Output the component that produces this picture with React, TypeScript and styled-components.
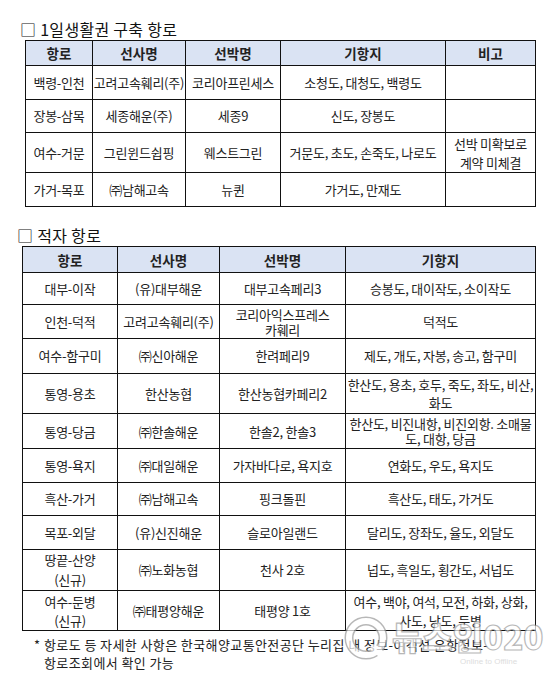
import React from 'react';
import styled, { createGlobalStyle } from 'styled-components';

const GlobalStyle = createGlobalStyle`
  html, body {
    margin: 0;
    padding: 0;
    background: #ffffff;
  }
  body {
    font-family: "Noto Sans CJK KR", "Noto Sans", sans-serif;
    color: #1a1a1a;
  }
`;

interface Row {
  h: number;
  cells: string[];
  lh?: number;
}

const table1Cols = [67, 93, 95, 165, 90];
const table1Head = ['항로', '선사명', '선박명', '기항지', '비고'];
const table1Rows: Row[] = [
  { h: 34, cells: ['백령-인천', '고려고속훼리(주)', '코리아프린세스', '소청도, 대청도, 백령도', ''] },
  { h: 33, cells: ['장봉-삼목', '세종해운(주)', '세종9', '신도, 장봉도', ''] },
  { h: 40, lh: 19, cells: ['여수-거문', '그린윈드쉽핑', '웨스트그린', '거문도, 초도, 손죽도, 나로도', '선박 미확보로\n계약 미체결'] },
  { h: 34, cells: ['가거-목포', '㈜남해고속', '뉴퀸', '가거도, 만재도', ''] },
];

const table2Cols = [95, 102, 126, 190];
const table2Head = ['항로', '선사명', '선박명', '기항지'];
const table2Rows: Row[] = [
  { h: 32, cells: ['대부-이작', '(유)대부해운', '대부고속페리3', '승봉도, 대이작도, 소이작도'] },
  { h: 34, lh: 15, cells: ['인천-덕적', '고려고속훼리(주)', '코리아익스프레스\n카훼리', '덕적도'] },
  { h: 35, cells: ['여수-함구미', '㈜신아해운', '한려페리9', '제도, 개도, 자봉, 송고, 함구미'] },
  { h: 40, lh: 18, cells: ['통영-용초', '한산농협', '한산농협카페리2', '한산도, 용초, 호두, 죽도, 좌도, 비산,\n화도'] },
  { h: 35, lh: 15, cells: ['통영-당금', '㈜한솔해운', '한솔2, 한솔3', '한산도, 비진내항, 비진외항. 소매물\n도, 대항, 당금'] },
  { h: 34, cells: ['통영-욕지', '㈜대일해운', '가자바다로, 욕지호', '연화도, 우도, 욕지도'] },
  { h: 33, cells: ['흑산-가거', '㈜남해고속', '핑크돌핀', '흑산도, 태도, 가거도'] },
  { h: 34, cells: ['목포-외달', '(유)신진해운', '슬로아일랜드', '달리도, 장좌도, 율도, 외달도'] },
  { h: 40, lh: 20, cells: ['땅끝-산양\n(신규)', '㈜노화농협', '천사 2호', '넙도, 흑일도, 횡간도, 서넙도'] },
  { h: 40, lh: 19, cells: ['여수-둔병\n(신규)', '㈜태평양해운', '태평양 1호', '여수, 백야, 여석, 모전, 하화, 상화,\n사도, 낭도, 둔병'] },
];

const sum = (a: number[]) => a.reduce((s, v) => s + v, 0);

const DataTable = ({ cols, head, rows, headH }: { cols: number[]; head: string[]; rows: Row[]; headH: number }) => (
  <Table style={{ width: sum(cols) }}>
    <colgroup>
      {cols.map((w, i) => (
        <col key={i} style={{ width: w }} />
      ))}
    </colgroup>
    <thead>
      <tr>
        {head.map((t) => (
          <HeadCell key={t} $h={headH}>{t}</HeadCell>
        ))}
      </tr>
    </thead>
    <tbody>
      {rows.map((r, i) => (
        <tr key={i}>
          {r.cells.map((c, j) => (
            <Cell key={j} $h={r.h} $lh={r.lh}>
              {c.split('\n').map((line, k) => (
                <Line key={k}>{line}</Line>
              ))}
            </Cell>
          ))}
        </tr>
      ))}
    </tbody>
  </Table>
);

export default function App() {
  return (
    <>
      <GlobalStyle />
      <Page>
        <Section $left={25}>
          <Title>□ 1일생활권 구축 항로</Title>
          <DataTable cols={table1Cols} head={table1Head} rows={table1Rows} headH={25} />
        </Section>
        <Section $left={22} $top={18}>
          <Title>□ 적자 항로</Title>
          <DataTable cols={table2Cols} head={table2Head} rows={table2Rows} headH={26} />
        </Section>
        <Note>
          <Star>*</Star>
          <NoteText>
            항로도 등 자세한 사항은 한국해양교통안전공단 누리집 내 정보-여객선 운항정보-
            <br />
            항로조회에서 확인 가능
          </NoteText>
        </Note>
        <Watermark>
          <svg width="210" height="60" viewBox="0 0 210 60">
            <g opacity="0.7">
              <circle cx="26" cy="30" r="17" fill="none" stroke="#9a9a9a" strokeWidth="9" />
              <circle cx="26" cy="30" r="17" fill="none" stroke="#ffffff" strokeWidth="6" />
              <path d="M34 40 L46 50" stroke="#ffffff" strokeWidth="7" strokeLinecap="round" />
              <text x="52" y="42" fontFamily="Noto Sans CJK KR, sans-serif" fontWeight="900" fontSize="33" fill="#ffffff" stroke="#9a9a9a" strokeWidth="1.2">
                뉴스인020
              </text>
              <text x="120" y="56" fontFamily="Liberation Sans, sans-serif" fontSize="8" fill="#cfcfcf">
                Online to Offline
              </text>
            </g>
          </svg>
        </Watermark>
      </Page>
    </>
  );
}

const Page = styled.div`
  position: relative;
  width: 557px;
  height: 677px;
  padding-top: 19px;
  box-sizing: border-box;
  overflow: hidden;
`;

const Section = styled.div<{ $left: number; $top?: number }>`
  display: flex;
  flex-direction: column;
  padding-left: ${(p) => p.$left}px;
  margin-top: ${(p) => p.$top || 0}px;
`;

const Title = styled.div`
  margin-left: -5px;
  height: 21px;
  font-size: 16px;
  line-height: 21px;
  color: #111;
  letter-spacing: 0.3px;
`;

const Table = styled.table`
  border-collapse: collapse;
  table-layout: fixed;
`;

const HeadCell = styled.th<{ $h: number }>`
  height: ${(p) => p.$h - 1}px;
  padding: 0;
  border: 1px solid #111;
  background: #dae3f3;
  font-size: 13.5px;
  font-weight: 700;
  color: #222;
  text-align: center;
  vertical-align: middle;
`;

const Cell = styled.td<{ $h: number; $lh?: number }>`
  height: ${(p) => p.$h - 1}px;
  padding: 0;
  border: 1px solid #111;
  font-size: 13px;
  line-height: ${(p) => (p.$lh ? p.$lh + 'px' : '16px')};
  color: #222;
  text-align: center;
  vertical-align: middle;
  white-space: nowrap;
  overflow: hidden;
  letter-spacing: -0.25px;
`;

const Line = styled.div``;

const Note = styled.div`
  display: flex;
  margin-top: 5px;
  padding-left: 34px;
  font-size: 13px;
  line-height: 18px;
  color: #222;
`;

const Star = styled.span`
  width: 10px;
`;

const NoteText = styled.div`
  letter-spacing: 0.4px;
`;

const Watermark = styled.div`
  position: absolute;
  left: 340px;
  top: 608px;
`;
